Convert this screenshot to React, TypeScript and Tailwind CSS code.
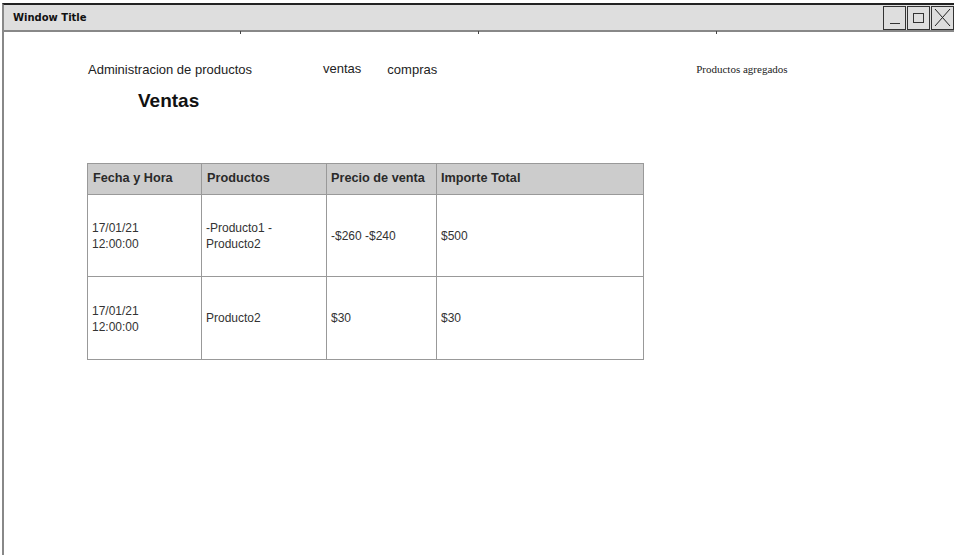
export default function App() {
  const rows = [
    { f: ["17/01/21", "12:00:00"], p: ["-Producto1 -", "Producto2"], pr: "-$260 -$240", t: "$500" },
    { f: ["17/01/21", "12:00:00"], p: ["Producto2"], pr: "$30", t: "$30" },
  ];
  return (
    <div className="w-[954px] h-[555px] bg-white overflow-hidden pt-[3px] pl-[2px]" style={{ fontFamily: "'Liberation Sans', Arial, sans-serif" }}>
      <div className="w-[952px] h-[552px] border-t-2 border-l-2 border-t-[#222] border-l-[#888] flex flex-col">
        <div className="h-[27px] bg-[#dedede] border-b-2 border-[#888] flex items-center justify-between pl-[9px] pr-0 relative">
          <span className="text-[10px] font-bold text-[#111]" style={{ fontFamily: "'DejaVu Sans', sans-serif" }}>Window Title</span>
          <div className="flex gap-[1px] pr-[0px]">
            <div className="w-[23px] h-[24px] border border-[#333] flex items-end justify-center pb-[5px]">
              <div className="w-[10px] h-[1px] bg-[#333]" />
            </div>
            <div className="w-[23px] h-[24px] border border-[#333] flex items-center justify-center">
              <div className="w-[11px] h-[10px] border border-[#333]" />
            </div>
            <div className="w-[23px] h-[24px] border border-[#333] flex items-center justify-center">
              <svg width="17" height="19" viewBox="0 0 17 19"><path d="M1 1 L16 18 M16 1 L1 18" stroke="#222" strokeWidth="1" fill="none" /></svg>
            </div>
          </div>
          <div className="absolute left-[236px] bottom-[-4px] w-[1px] h-[3px] bg-[#444]" />
          <div className="absolute left-[474px] bottom-[-4px] w-[1px] h-[3px] bg-[#444]" />
          <div className="absolute left-[712px] bottom-[-4px] w-[1px] h-[3px] bg-[#444]" />
        </div>
        <div className="flex-1 relative">
          <div className="flex items-start pt-[28px] pl-[84px] text-[#222]">
            <span className="text-[13px]">Administracion de productos</span>
            <span className="text-[13px] ml-[71px] mt-[-1px]">ventas</span>
            <span className="text-[13px] ml-[26px]">compras</span>
            <span className="text-[11px] ml-[259px] mt-[1px] text-[#222]" style={{ fontFamily: "'Liberation Serif', 'Times New Roman', serif" }}>Productos agregados</span>
          </div>
          <div className="pl-[134px] mt-[7px] text-[19px] font-bold text-[#111]">Ventas</div>
          <div className="ml-[83px] mt-[48px] w-[557px] border border-[#999] text-[#333]">
            <div className="flex h-[31px] bg-[#cccccc] border-b border-[#999] text-[12.7px] font-bold text-[#2a2a2a]">
              <div className="w-[114px] border-r border-[#999] flex items-center pl-[5px]">Fecha y Hora</div>
              <div className="w-[125px] border-r border-[#999] flex items-center pl-[5px]">Productos</div>
              <div className="w-[110px] border-r border-[#999] flex items-center pl-[4px]">Precio de venta</div>
              <div className="flex-1 flex items-center pl-[4px]">Importe Total</div>
            </div>
            {rows.map((r, i) => (
              <div key={i} className={`flex h-[82px] text-[12px] leading-[16px] ${i === 0 ? "border-b border-[#999]" : ""}`}>
                <div className="w-[114px] border-r border-[#999] flex flex-col justify-center pl-[4px] pt-[1px]">
                  {r.f.map((l, j) => <div key={j}>{l}</div>)}
                </div>
                <div className="w-[125px] border-r border-[#999] flex flex-col justify-center pl-[4px]">
                  {r.p.map((l, j) => <div key={j}>{l}</div>)}
                </div>
                <div className="w-[110px] border-r border-[#999] flex items-center pl-[4px]">{r.pr}</div>
                <div className="flex-1 flex items-center pl-[4px]">{r.t}</div>
              </div>
            ))}
          </div>
        </div>
      </div>
    </div>
  );
}
